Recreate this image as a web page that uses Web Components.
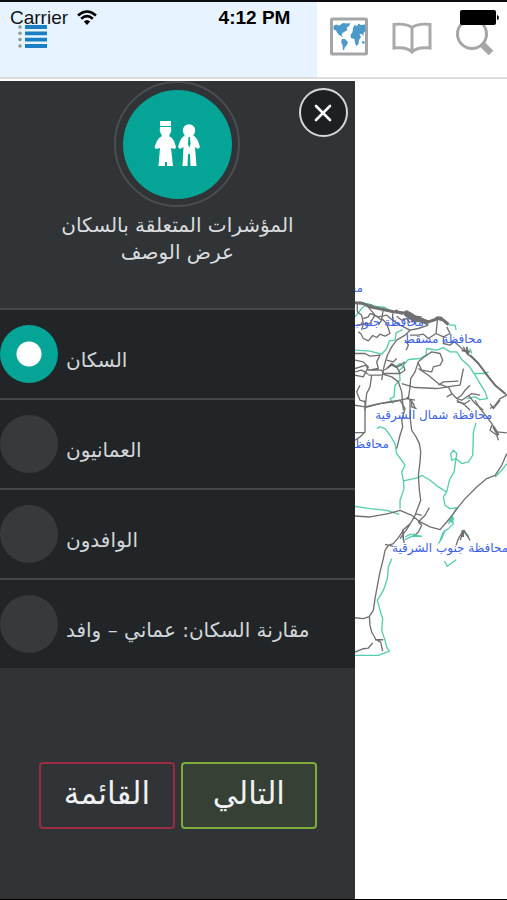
<!DOCTYPE html>
<html lang="ar">
<head>
<meta charset="utf-8">
<meta name="viewport" content="width=device-width, initial-scale=1">
<title>المؤشرات</title>
<style>
  body { margin: 0; background: #fff; font-family: "Liberation Sans", "DejaVu Sans", sans-serif; }
</style>
</head>
<body>
<map-app></map-app>
<script>
const define = (name, html, setup) => {
  const template = document.createElement('template');
  template.innerHTML = html;
  customElements.define(name, class extends HTMLElement {
    constructor() {
      super();
      this.attachShadow({ mode: 'open' }).append(template.content.cloneNode(true));
    }
    connectedCallback() { if (setup) setup(this, this.shadowRoot); }
  });
};

define('status-bar', `
<style>
  :host { display: grid; grid-template-columns: 1fr auto 1fr; align-items: center; height: 32px; padding: 0 8px 0 10px; font-size: 19px; color: #101418; box-sizing: border-box; pointer-events: none; }
  .left { display: flex; align-items: center; gap: 9px; }
  .right { justify-self: end; display: flex; }
  b { color: #000; }
</style>
<span class="left">Carrier
  <svg width="20" height="16" viewBox="0 0 20 16" fill="none" stroke="#000" stroke-width="2.6"><path d="M1 5.4Q10-2.4 19 5.4M4.2 8.8Q10 3.6 15.8 8.8"/><path d="M6.8 11.4Q10 8.4 13.2 11.4L10 15Z" fill="#000" stroke="none"/></svg>
</span>
<b>4:12 PM</b>
<span class="right"><svg width="39" height="16" viewBox="0 0 39 16"><rect width="36" height="15" rx="2"/><path d="M37 5q2 .5 2 2.500t-2 2.500z"/></svg></span>`);

define('top-bar', `
<style>
  :host { display: flex; position: relative; height: 75px; border-bottom: 2px solid #dcdcdc; background: #fff; }
  .menu { width: 62.5%; background: #e7f4ff; display: flex; align-items: flex-start; padding: 22px 0 0 18px; box-sizing: border-box; }
  .tools { flex: 1; display: flex; justify-content: space-between; align-items: flex-start; padding: 14px 12px 0 12px; }
  button { border: 0; background: none; padding: 0; display: block; }
  svg { display: block; }
  status-bar { position: absolute; inset: 0 0 auto 0; }
</style>
<div class="menu"><button aria-label="القائمة">
  <svg width="30" height="26" viewBox="0 0 30 26"><g fill="#8b98a3"><circle cx="2" cy="3" r="1.800"/><circle cx="2" cy="9.300" r="1.800"/><circle cx="2" cy="15.600" r="1.800"/><circle cx="2" cy="22" r="1.800"/></g><path d="M7 3H29M7 9.300H29M7 15.600H29M7 22H29" stroke="#1c7ec4" stroke-width="3.800"/></svg>
</button></div>
<div class="tools">
  <button aria-label="الخريطة"><svg width="40" height="40" viewBox="0 0 40 40"><rect x="2.500" y="3" width="35" height="35" rx="1" fill="#fff" stroke="#a5a5a5" stroke-width="3"/>
    <g fill="#4b9ac9"><path d="M4.500 10L7 8.500 10 9.500 12 8.500 14 7 18 7.500 21 7 20.500 9.500 17.500 12 18.500 14 16 15.500 13.500 17 12.500 19 14 21 11.500 20 9 18 7 14.500 4.500 13.500Z"/><path d="M13 23L16 23 19 26 18 29 16 31 15 34 14 34 13.500 29 12 26Z"/><path d="M24 12L25.500 9 28 10 29.500 7.500 32 9 36 8.500 36.500 15 34.500 17 34.500 20 32.500 18 30.500 18 32 21 30 24 29.500 28 27.500 30 26 27 25.500 23 22 22 21.500 19 23.500 16Z"/><path d="M33 25L36 26 35 28 33 27Z"/></g></svg></button>
  <button aria-label="الدليل"><svg width="40" height="40" viewBox="0 0 40 40" fill="none" stroke="#a9a9a9" stroke-width="3"><path d="M2 8.500Q14 7 20 11.500Q26 7 38 8.500V32Q25 30.500 20 36Q15 30.500 2 32ZM20 11.500V35"/></svg></button>
  <button aria-label="بحث"><svg width="40" height="40" viewBox="0 0 40 40" fill="none" stroke="#a6a6a6"><circle cx="17" cy="18" r="14.500" stroke-width="3"/><path d="M27 28L36 37" stroke-width="6.500"/></svg></button>
</div>
<status-bar></status-bar>`);

define('indicator-head', `
<style>
  :host { display: flex; flex-direction: column; align-items: center; padding-bottom: 42px; color: #d9dcde; text-align: center; }
  .ring { width: 126px; height: 126px; border: 2px solid #4b4e50; border-radius: 50%; box-sizing: border-box; display: grid; place-items: center; }
  .disc { width: 109px; height: 109px; border-radius: 50%; background: #04a497; display: grid; place-items: center; }
  h1 { margin: 5px 0 0; font-size: 20px; line-height: 27px; font-weight: 400; white-space: nowrap; }
  a { color: inherit; text-decoration: none; font-size: 20px; line-height: 27px; }
</style>
<div class="ring"><div class="disc">
  <svg width="46" height="46" viewBox="0 0 46 46" fill="#fff"><path d="M6 0H17V5H6ZM6 6H17Q18 10 16 13L15 15Q19 17 20 20L22 26 21 28 17 27 19 45H13V41H11V45H4.500L6 27 2 28 .500 26 3 20Q4 17 8 15L7 13Q5 10 6 6Z"/><circle cx="35" cy="9.500" r="6.200"/><path d="M31 14H39Q43 17 44 20L46 26 44 28 41 26 42.500 45H36.500L36 33H34L33.500 45H28.500L29.500 26 26 28 24 26 26 20Q27 17 31 14Z"/><path d="M34.500 16H36L36.500 23 35.200 27 34 23Z" fill="#04a497"/></svg>
</div></div>
<h1 dir="rtl"><slot></slot></h1>
<a href="#about" dir="rtl"><slot name="link"></slot></a>`);

define('radio-row', `
<style>
  :host { display: block; height: 90px; box-sizing: border-box; border-top: 2px solid #45484a; background: #212527; }
  label { display: flex; gap: 8px; align-items: center; height: 100%; font-size: 20px; color: #d3d6d8; }
  input { appearance: none; margin: 0; width: 58px; height: 58px; border-radius: 50%; background: #373a3c; flex: none; }
  input:checked { background: radial-gradient(circle, #fff 12px, #04a497 13px); }
  span { padding-top: 12px; white-space: nowrap; }
</style>
<label><input type="radio" name="indicator"><span dir="rtl"><slot></slot></span></label>`,
(host, root) => { root.querySelector('input').checked = host.hasAttribute('checked'); });

define('outline-button', `
<style>
  :host { display: flex; flex: 1; }
  button { flex: 1; height: 67px; padding: 0 0 6px; border: 2px solid var(--edge); border-radius: 4px; background: var(--fill, transparent); color: #eef0f1; font-family: inherit; font-size: 31px; }
</style>
<button dir="rtl"><slot></slot></button>`);

define('side-drawer', `
<style>
  :host { display: block; position: relative; background: #303436; box-sizing: border-box; font-family: "DejaVu Sans", sans-serif; }
  .close { position: absolute; top: 7px; right: 7px; width: 49px; height: 49px; border: 2px solid #d5d6d6; border-radius: 50%; background: #1d2022; display: grid; place-items: center; padding: 0; }
  .actions { display: flex; gap: 6px; padding: 94px 38px 0 39px; }
  .list { border: 0; margin: 0; padding: 0; min-width: 0; }
</style>
<indicator-head>المؤشرات المتعلقة بالسكان<span slot="link">عرض الوصف</span></indicator-head>
<button class="close" aria-label="إغلاق"><svg width="18" height="18" viewBox="0 0 18 18" stroke="#fff" stroke-width="2.600" stroke-linecap="round"><path d="M2 2L16 16M16 2L2 16"/></svg></button>
<fieldset class="list">
  <radio-row checked>السكان</radio-row>
  <radio-row>العمانيون</radio-row>
  <radio-row>الوافدون</radio-row>
  <radio-row>مقارنة السكان: عماني – وافد</radio-row>
</fieldset>
<div class="actions">
  <outline-button style="--edge:#9b2c42">القائمة</outline-button>
  <outline-button style="--edge:#7dac3b;--fill:#374034">التالي</outline-button>
</div>`);

define('road-map', `
<style>
  :host { display: block; background: #fff; overflow: hidden; min-width: 0; }
  svg { display: block; width: 100%; height: auto; }
  text { font-family: "DejaVu Sans", sans-serif; font-size: 12px; fill: #3a60e6; direction: rtl; }
</style>
<svg viewBox="355 81 152 816" fill="none" stroke-linejoin="round">
  <g transform="translate(350 270) scale(.3333)">
    <g stroke="#55ccb0" stroke-width="4">
      <path d="M15 140L35 115 50 100 75 108 105 112 125 125M280 150L300 165 315 165 318 180M15 240L60 243 95 252 110 235 118 212 135 210 138 188 158 178M135 290L160 285 175 268 210 265 228 255 230 235 260 240 280 232 300 245 320 245 335 268 355 285 372 310 390 340 405 365 412 385 390 388 375 380 350 385M135 290L150 280 160 290 148 300 150 330 135 345 132 380 120 385 130 400M372 310H405L415 305M360 235L365 250"/>
    </g>
    <g stroke="#707070" stroke-width="4">
      <path d="M15 98L40 100 60 110 100 118 130 125 175 130 200 142 235 155 265 145 280 150 295 163" stroke-width="9"/>
      <path d="M125 128L140 120 155 132 170 122 185 130 195 138 215 140M250 150L262 140 275 142 285 155M28 94L45 106 62 104 75 116"/>
      <path d="M165 130L190 148 215 150 235 160" stroke-width="13"/>
      <path d="M22 100V125L35 135 40 160 35 180M50 105L75 135 60 160 20 165M75 135L95 150 85 165M100 118L95 145 110 160 120 190 105 198 90 192 80 202 68 196 55 212 40 205 32 190 25 185M128 130V150L150 165 180 180 165 195 140 210 125 230 112 255 103 285 98 310 95 330M180 180L205 175 235 165M262 150L258 190 235 205 220 192 205 195 180 195M258 190L280 200 280 220 300 225 312 214 330 230 345 245M280 200L300 190 290 170M165 210L175 225 168 240M340 230L350 250 370 265 385 280 400 300 415 320 435 345 455 362 470 375 450 385 435 405 420 415M60 130L85 140 110 135 128 150M40 145L55 140 60 130M140 138L155 150 170 145 180 158"/>
      <path d="M335 240L360 245M350 230L355 255" stroke-width="6"/>
      <path d="M360 255L385 280 415 320 435 345 465 370" stroke-width="6"/>
      <path d="M15 250L45 250 60 258 90 255 80 275 85 295 55 300 48 285 15 295M15 270L40 275 55 290 40 320 15 315M15 305L35 300 55 312M55 300L95 300 100 310 150 310 140 290 125 280 110 295M103 300L125 285 140 292 165 275M110 270L130 275 140 265M150 310L165 300 160 285M55 315H95M65 315L60 350 50 370 45 420M98 312L125 320 145 335 155 365 160 420M30 345L20 365 30 390 45 395M45 412L90 400 130 395 170 385 195 390M175 385L180 350 182 325 195 305 205 275 220 262 245 245 270 250 278 270 270 285 250 290 245 305 215 300 203 275M205 295L235 315 265 340 290 350 330 345 335 320 340 295M155 340L195 352 260 355 295 350 305 370 320 385 335 375 345 360 360 345M265 345L280 335 325 333M170 380L190 400 195 415M305 372L290 380M320 390L345 405 360 420M320 385L335 390 365 370 390 375M355 375L375 400 400 420"/>
    </g>
  </g>
  <g transform="translate(350 400) scale(.3333)">
    <g stroke="#55ccb0" stroke-width="4">
      <path d="M80 85L90 80 105 85 120 105 135 130 140 160 155 180 165 195 155 215 160 240 162 265 150 300 150 325M15 318L60 325 110 330 148 342M160 242L205 232 215 225 240 240 265 260 290 275M378 68L370 95 368 165 355 185 335 190 318 175 305 180 302 160 310 150 320 160 312 215 298 240 290 275 280 290 285 315 300 325 320 322M470 190L455 210 435 230M320 320L305 350 310 370 295 385 280 395 270 420M295 370L310 350M165 410L180 402 215 408"/>
      <path d="M300 365L308 352" stroke-width="12"/>
    </g>
    <g stroke="#707070" stroke-width="4">
      <path d="M45 0V95L30 110 15 120M15 97H45M15 15L45 20 80 12 115 5 150 0 165 25 155 60 158 80 150 105 140 145M185 0V20L200 25M180 50L185 90 198 110 208 130 212 155 210 185 205 225 208 270 212 300 195 345 175 380 150 415M15 347L60 350 115 340 150 330 185 345 210 365 240 380 270 388 290 365 310 340 325 320 345 295 380 260 410 235 435 225 455 195 470 160M238 322L225 345 205 365 215 375 205 395 190 410M195 340L215 345M320 5L345 10 360 0M375 0L390 25 410 50 425 70 440 95 470 98M425 75L420 90 440 105 445 120M420 10L430 25 450 0M160 420L158 390 180 370M330 420L342 390 360 420M180 0V50"/>
      <path d="M430 80L445 105" stroke-width="8"/>
    </g>
  </g>
  <g transform="translate(350 530) scale(.3333)">
    <g stroke="#55ccb0" stroke-width="4">
      <path d="M165 28L185 18 215 18M190 10L205 18M285 0L275 25 265 40M283 92L292 108 318 88M125 85L115 110 112 145 100 180 82 210 90 240 98 265 95 300 105 330 110 350 118 362 85 375H15M340 5L355 15"/>
    </g>
    <g stroke="#707070" stroke-width="4">
      <path d="M160 0L145 22 130 40 115 45 105 60 100 85 90 125 85 150 75 205 70 240 58 258 60 285 65 305 78 328 92 335 98 362M158 0L162 38M15 262L40 265 60 258M75 328H100M15 365L40 355 55 353 68 338M340 0L325 25 318 45M340 0L355 20M105 42L130 48"/>
      <path d="M338 20V0" stroke-width="8"/>
    </g>
  </g>
  <text x="363" y="292">محافظة</text>
  <text x="424" y="326">محافظة جنوب</text>
  <text x="482" y="343">محافظة مسقط</text>
  <text x="492" y="419">محافظة شمال الشرقية</text>
  <text x="389" y="448">محافظة</text>
  <text x="508" y="552">محافظة جنوب الشرقية</text>
</svg>`);

define('map-app', `
<style>
  :host { display: grid; grid-template-rows: auto 1fr; gap: 2px; min-height: 100vh; box-sizing: border-box; border-top: 2px solid #0b0b12; border-bottom: 1px solid #000; }
  main { display: grid; grid-template-columns: 70fr 30fr; }
</style>
<top-bar></top-bar>
<main><side-drawer></side-drawer><road-map></road-map></main>`);
</script>
</body>
</html>
